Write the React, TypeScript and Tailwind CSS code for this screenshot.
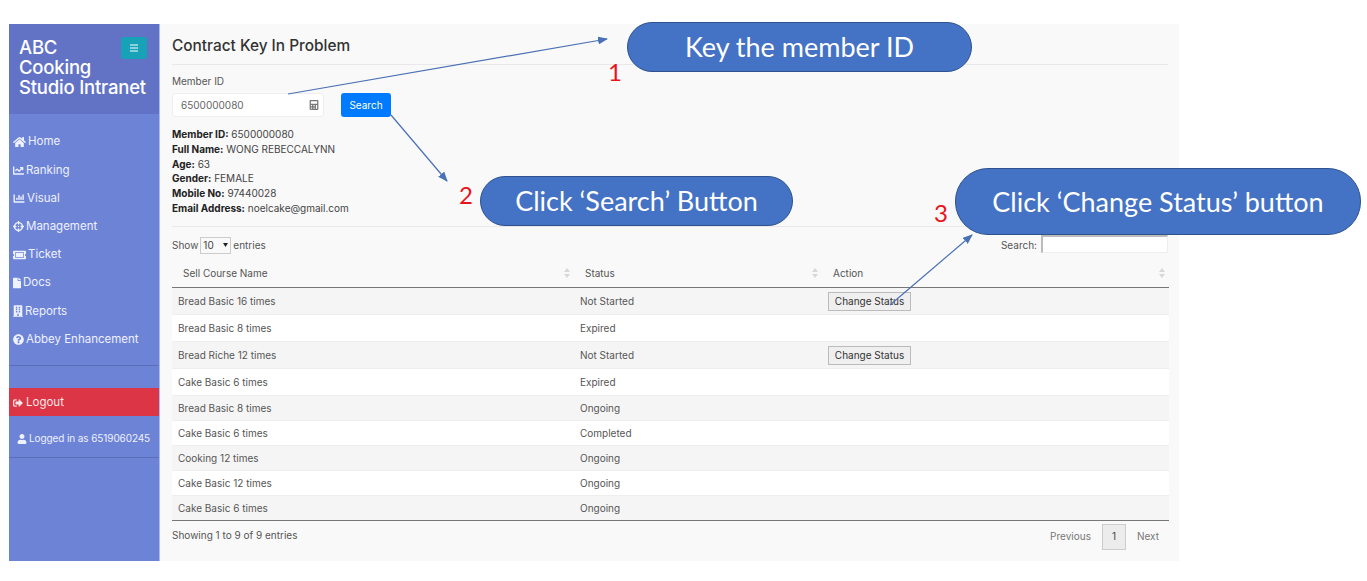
import React from "react";
import { FaHome, FaChartLine, FaChartBar, FaCrosshairs, FaTicketAlt, FaFile, FaBuilding, FaQuestionCircle, FaUser, FaCalculator, FaSignOutAlt } from "react-icons/fa";

const nav: [React.ElementType, string, string][] = [
  [FaHome, "Home", "h-[12px] w-[13px]"],
  [FaChartLine, "Ranking", "h-[11px] w-[11px]"],
  [FaChartBar, "Visual", "h-[11px] w-[12px]"],
  [FaCrosshairs, "Management", "h-[11px] w-[11px]"],
  [FaTicketAlt, "Ticket", "h-[12px] w-[13px]"],
  [FaFile, "Docs", "h-[12px] w-[8px]"],
  [FaBuilding, "Reports", "h-[12px] w-[10px]"],
  [FaQuestionCircle, "Abbey Enhancement", "h-[11px] w-[11px]"],
];

const rows: [string, string, boolean, string][] = [
  ["Bread Basic 16 times", "Not Started", true, "h-[27px] bg-[#f5f5f5]"],
  ["Bread Basic 8 times", "Expired", false, "h-[27px] bg-white"],
  ["Bread Riche 12 times", "Not Started", true, "h-[27px] bg-[#f5f5f5]"],
  ["Cake Basic 6 times", "Expired", false, "h-[27px] bg-white"],
  ["Bread Basic 8 times", "Ongoing", false, "h-[25px] bg-[#f5f5f5]"],
  ["Cake Basic 6 times", "Completed", false, "h-[25px] bg-white"],
  ["Cooking 12 times", "Ongoing", false, "h-[25px] bg-[#f5f5f5]"],
  ["Cake Basic 12 times", "Ongoing", false, "h-[25px] bg-white"],
  ["Cake Basic 6 times", "Ongoing", false, "h-[25px] bg-[#f5f5f5]"],
];

function Sort() {
  return (
    <svg width="6" height="10" viewBox="0 0 6 10" className="shrink-0">
      <path d="M3 0L6 4H0Z M3 10L0 6H6Z" fill="#d8d8d8" />
    </svg>
  );
}

function Callout({ className, children }: { className: string; children: React.ReactNode }) {
  return (
    <div className={`absolute flex items-center justify-center border border-[#2f528f] bg-[#4472c4] pt-[1px] text-[27px] text-white font-['Lato',sans-serif] ${className}`}>
      {children}
    </div>
  );
}

function Num({ className, children }: { className: string; children: React.ReactNode }) {
  return <div className={`absolute text-[24px] leading-none text-[#e8141c] font-['Lato',sans-serif] ${className}`}>{children}</div>;
}

export default function App() {
  return (
    <div className="relative h-[581px] w-[1367px] overflow-hidden bg-white pl-[9px] pt-[24px] font-['Inter',sans-serif]">
      <div className="flex h-[537px] w-[1170px]">
        <aside className="flex w-[151px] shrink-0 flex-col border-r border-[#a9bbf0] bg-[#6d83d6] text-[11.5px] text-white">
          <div className="flex h-[90px] items-start justify-between bg-[#6273c6] pl-[10px] pr-[12px] pt-[13px]">
            <div className="w-[100px] text-[18.5px] font-medium leading-[20px] tracking-[-0.2px]">
              ABC<br />Cooking<br /><span className="whitespace-nowrap">Studio Intranet</span>
            </div>
            <div className="flex h-[22px] w-[26px] shrink-0 items-center justify-center rounded-[3px] bg-[#17a2b8]">
              <svg width="10" height="10" viewBox="0 0 10 10"><path d="M1 2H9M1 5H9M1 8H9" stroke="white" strokeWidth="1" /></svg>
            </div>
          </div>
          <nav className="mt-[14px] flex flex-col">
            {nav.map(([Icon, label, size]) => (
              <div key={label} className="flex h-[28.2px] items-center gap-[2px] pl-[4px] text-[#eef1ff]">
                <Icon className={`shrink-0 ${size}`} />
                <span>{label}</span>
              </div>
            ))}
          </nav>
          <div className="mt-[11px] border-t border-[#5a6db8]" />
          <div className="mt-[22px] flex h-[28px] items-center gap-[3px] bg-[#dc3545] pl-[4px] pt-[2px] text-[#f7e6e8]">
            <FaSignOutAlt className="h-[10px] w-[10px]" />
            <span>Logout</span>
          </div>
          <div className="flex h-[42px] items-center gap-[2px] border-b border-[#5a6db8] pl-[8px] pt-[5px] text-[10px] tracking-[-0.1px] whitespace-nowrap text-[#eef1ff]">
            <FaUser className="h-[10px] w-[10px]" />
            <span>Logged in as 6519060245</span>
          </div>
        </aside>
        <main className="min-w-0 flex-1 bg-[#f9f9f9] pl-[12px] pr-[11px] text-[10px] text-[#555]">
          <h1 className="flex h-[41px] items-center border-b border-[#e9e9e9] pt-[3px] text-[15.4px] font-medium text-[#333]">Contract Key In Problem</h1>
          <div className="mt-[9px] text-[10px] leading-[14px] text-[#555]">Member ID</div>
          <div className="mt-[5px] flex items-center gap-[17px]">
            <div className="flex h-[24px] w-[152px] items-center justify-between rounded-[3px] border border-[#eeeeee] bg-white pl-[8px] pr-[4px] text-[#666]">
              <span>6500000080</span>
              <FaCalculator className="h-[10px] w-[10px] text-[#777]" />
            </div>
            <button className="h-[24px] w-[50px] rounded-[3px] bg-[#007bff] text-[10px] text-white">Search</button>
          </div>
          <div className="mt-[10px] text-[10px] leading-[14.8px] text-[#444]">
            <div><b className="text-[#222]">Member ID:</b> 6500000080</div>
            <div><b className="text-[#222]">Full Name:</b> WONG REBECCALYNN</div>
            <div><b className="text-[#222]">Age:</b> 63</div>
            <div><b className="text-[#222]">Gender:</b> FEMALE</div>
            <div><b className="text-[#222]">Mobile No:</b> 97440028</div>
            <div><b className="text-[#222]">Email Address:</b> noelcake@gmail.com</div>
          </div>
          <div className="mt-[10px] border-t border-[#e9e9e9]" />
          <div className="flex h-[34px] items-center justify-between pt-[3px]">
            <div className="flex items-center gap-[2px]">
              <span>Show</span>
              <span className="flex h-[17px] w-[31px] items-center justify-between border border-[#ccc] bg-[#f9f9f9] px-[2px] text-[#444]">
                10
                <svg width="5" height="4" viewBox="0 0 5 4"><path d="M0 0H5L2.5 4Z" fill="#222" /></svg>
              </span>
              <span>entries</span>
            </div>
            <div className="flex items-center gap-[4px]">
              <span>Search:</span>
              <span className="mb-[2px] block h-[18px] w-[127px] border-t-2 border-l-2 border-r border-b border-t-[#bbb] border-l-[#bbb] border-r-[#eee] border-b-[#eee] bg-white" />
            </div>
          </div>
          <table className="w-[997px] table-fixed border-collapse">
            <thead>
              <tr className="h-[27px] border-b border-[#777] text-left text-[#555]">
                <th className="w-[402px] pb-[2px] pl-[11px] pr-[4px] font-normal"><div className="flex items-center justify-between">Sell Course Name<Sort /></div></th>
                <th className="w-[248px] pb-[2px] pl-[11px] pr-[4px] font-normal"><div className="flex items-center justify-between">Status<Sort /></div></th>
                <th className="pb-[2px] pl-[11px] pr-[4px] font-normal"><div className="flex items-center justify-between">Action<Sort /></div></th>
              </tr>
            </thead>
            <tbody>
              {rows.map(([name, status, hasBtn, cls], i) => (
                <tr key={i} className={`${cls} border-b ${i === rows.length - 1 ? "border-[#777]" : "border-[#eeeeee]"}`}>
                  <td className="pl-[6px]">{name}</td>
                  <td className="pl-[6px]">{status}</td>
                  <td className="pl-[6px]">
                    {hasBtn && (
                      <button className="flex h-[19px] w-[83px] items-center justify-center border border-[#bbb] bg-[#efefef] text-[10px] text-[#333]">Change Status</button>
                    )}
                  </td>
                </tr>
              ))}
            </tbody>
          </table>
          <div className="flex h-[31px] items-center justify-between">
            <span className="-mt-[2px]">Showing 1 to 9 of 9 entries</span>
            <div className="flex items-center pr-[9px]">
              <span className="text-[#777]">Previous</span>
              <span className="mx-[11px] flex h-[26px] w-[24px] items-center justify-center border border-[#ccc] bg-[#ececec] text-[#444]">1</span>
              <span className="text-[#777]">Next</span>
            </div>
          </div>
        </main>
      </div>

      <svg className="absolute left-0 top-0" width="1367" height="581">
        <defs>
          <marker id="a" markerWidth="10" markerHeight="8" refX="9" refY="4" orient="auto" markerUnits="userSpaceOnUse">
            <path d="M0 0L10 4L0 8Z" fill="#4a70b5" />
          </marker>
        </defs>
        <g stroke="#4a70b5" strokeWidth="1.2" fill="none">
          <line x1="288" y1="94" x2="607" y2="39" markerEnd="url(#a)" />
          <line x1="391" y1="115" x2="447" y2="181" markerEnd="url(#a)" />
          <line x1="890" y1="305" x2="972" y2="235" markerEnd="url(#a)" />
        </g>
      </svg>

      <Callout className="left-[627px] top-[22px] h-[50px] w-[345px] rounded-[26px]">Key the member ID</Callout>
      <Callout className="left-[480px] top-[176px] h-[50px] w-[313px] rounded-[26px]">Click ‘Search’ Button</Callout>
      <Callout className="left-[955px] top-[168px] h-[67px] w-[406px] rounded-[33px]">Click ‘Change Status’ button</Callout>
      <Num className="left-[608px] top-[60px]">1</Num>
      <Num className="left-[459px] top-[183px]">2</Num>
      <Num className="left-[934px] top-[201px]">3</Num>
    </div>
  );
}
